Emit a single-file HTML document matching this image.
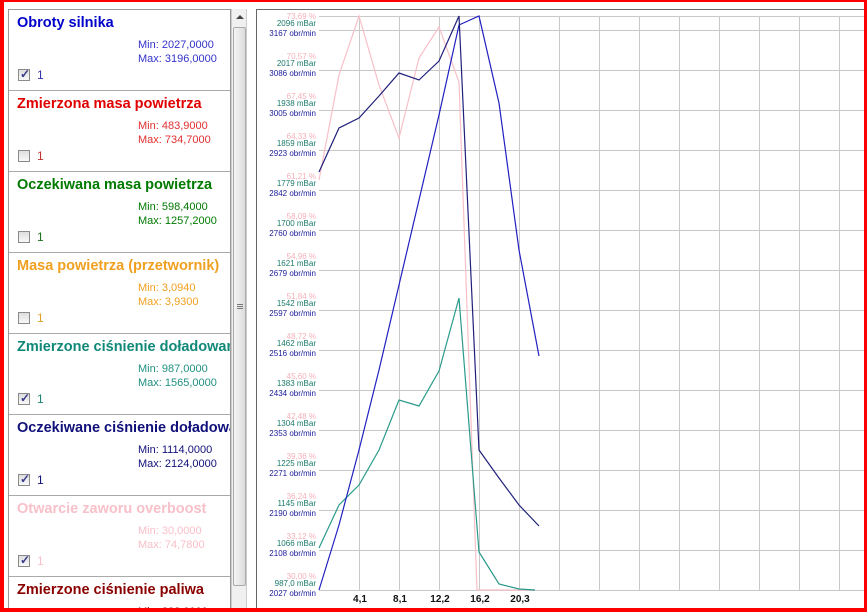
<!DOCTYPE html>
<html><head><meta charset="utf-8"><style>
*{margin:0;padding:0;box-sizing:border-box}
html,body{width:867px;height:612px;overflow:hidden}
body{background:#fff;font-family:"Liberation Sans",Arial,sans-serif;position:relative}
.frame{position:absolute;left:0;top:0;width:867px;height:612px;border-left:4px solid #f00;border-top:2px solid #f00;border-right:3px solid #f00;border-bottom:4px solid #f00;z-index:10;pointer-events:none}
.list{position:absolute;left:8px;top:9px;width:223px;height:603px;border:1px solid #999;border-bottom:none;overflow:hidden;background:#fff}
.item{height:81px;border-bottom:1px solid #aaa;position:relative}
.t{position:absolute;left:8px;top:5px;font-weight:bold;font-size:14.5px;white-space:nowrap}
.mm{position:absolute;left:129px;top:28px;font-size:11px;line-height:14px}
.cb{position:absolute;left:9px;top:59px;width:12px;height:12px;border:1px solid #8a8a8a;background:linear-gradient(#dedede,#f8f8f8)}
.cb.on::after{content:"✓";position:absolute;left:1px;top:-3px;font-size:12px;color:#3a3a8a;font-weight:bold}
.n{position:absolute;left:28px;top:58px;font-size:12px}
.sb{position:absolute;left:231px;top:9px;width:16px;height:603px;background:#f0f0f0;border-left:1px solid #ccc;border-right:1px solid #ccc}
.thumb{position:absolute;left:1px;top:18px;width:13px;height:559px;background:linear-gradient(90deg,#f4f4f4,#dcdcdc);border:1px solid #aaa;border-radius:2px}
</style></head><body>
<div class="list">
 <div class="item" style="color:#0000cc"><div class="t">Obroty silnika</div><div class="mm" style="color:#3333cc">Min: 2027,0000<br>Max: 3196,0000</div><div class="cb on"></div><div class="n" style="color:#3333aa">1</div></div>
 <div class="item" style="color:#e00000"><div class="t">Zmierzona masa powietrza</div><div class="mm" style="color:#e03030">Min: 483,9000<br>Max: 734,7000</div><div class="cb"></div><div class="n" style="color:#c03030">1</div></div>
 <div class="item" style="color:#007a00"><div class="t">Oczekiwana masa powietrza</div><div class="mm" style="color:#007a00">Min: 598,4000<br>Max: 1257,2000</div><div class="cb"></div><div class="n" style="color:#207020">1</div></div>
 <div class="item" style="color:#f0a020"><div class="t">Masa powietrza (przetwornik)</div><div class="mm" style="color:#f0a020">Min: 3,0940<br>Max: 3,9300</div><div class="cb"></div><div class="n" style="color:#e0a020">1</div></div>
 <div class="item" style="color:#108878"><div class="t">Zmierzone ciśnienie doładowania</div><div class="mm" style="color:#209080">Min: 987,0000<br>Max: 1565,0000</div><div class="cb on"></div><div class="n" style="color:#208070">1</div></div>
 <div class="item" style="color:#10107a"><div class="t">Oczekiwane ciśnienie doładowania</div><div class="mm" style="color:#10107a">Min: 1114,0000<br>Max: 2124,0000</div><div class="cb on"></div><div class="n" style="color:#10107a">1</div></div>
 <div class="item" style="color:#f8c0c8"><div class="t">Otwarcie zaworu overboost</div><div class="mm" style="color:#f8c0c8">Min: 30,0000<br>Max: 74,7800</div><div class="cb on"></div><div class="n" style="color:#f8c0c8">1</div></div>
 <div class="item" style="color:#8a0000"><div class="t">Zmierzone ciśnienie paliwa</div><div class="mm" style="color:#8a0000">Min: 328,0000<br>Max: 0</div></div>
</div>
<div class="sb"><div style="position:absolute;left:4px;top:6px;width:0;height:0;border-left:4px solid transparent;border-right:4px solid transparent;border-bottom:4px solid #444"></div><div class="thumb"><div style="position:absolute;left:3px;top:276px;width:6px;height:5px;border-top:1px solid #777;border-bottom:1px solid #777"></div><div style="position:absolute;left:3px;top:278px;width:6px;height:1px;background:#777"></div></div></div>
<svg style="position:absolute;left:0;top:0" width="867" height="612" font-family="Liberation Sans,Arial,sans-serif">
<line x1="256.5" y1="9" x2="256.5" y2="612" stroke="#666"/>
<line x1="256" y1="9.5" x2="867" y2="9.5" stroke="#666"/>
<g stroke="#c8c8c8" stroke-width="1">
<line x1="319" y1="16.5" x2="867" y2="16.5"/>
<line x1="319" y1="30.5" x2="867" y2="30.5"/><line x1="319" y1="70.5" x2="867" y2="70.5"/><line x1="319" y1="110.5" x2="867" y2="110.5"/><line x1="319" y1="150.5" x2="867" y2="150.5"/><line x1="319" y1="190.5" x2="867" y2="190.5"/><line x1="319" y1="230.5" x2="867" y2="230.5"/><line x1="319" y1="270.5" x2="867" y2="270.5"/><line x1="319" y1="310.5" x2="867" y2="310.5"/><line x1="319" y1="350.5" x2="867" y2="350.5"/><line x1="319" y1="390.5" x2="867" y2="390.5"/><line x1="319" y1="430.5" x2="867" y2="430.5"/><line x1="319" y1="470.5" x2="867" y2="470.5"/><line x1="319" y1="510.5" x2="867" y2="510.5"/><line x1="319" y1="550.5" x2="867" y2="550.5"/><line x1="319" y1="590.5" x2="867" y2="590.5"/>
<line x1="359.5" y1="16" x2="359.5" y2="590"/><line x1="399.5" y1="16" x2="399.5" y2="590"/><line x1="439.5" y1="16" x2="439.5" y2="590"/><line x1="479.5" y1="16" x2="479.5" y2="590"/><line x1="519.5" y1="16" x2="519.5" y2="590"/><line x1="559.5" y1="16" x2="559.5" y2="590"/><line x1="599.5" y1="16" x2="599.5" y2="590"/><line x1="639.5" y1="16" x2="639.5" y2="590"/><line x1="679.5" y1="16" x2="679.5" y2="590"/><line x1="719.5" y1="16" x2="719.5" y2="590"/><line x1="759.5" y1="16" x2="759.5" y2="590"/><line x1="799.5" y1="16" x2="799.5" y2="590"/><line x1="839.5" y1="16" x2="839.5" y2="590"/>
</g>
<g font-size="8" text-anchor="end">
<g fill="#f4b0b8">
<text x="316" y="19">73,69 %</text><text x="316" y="59">70,57 %</text><text x="316" y="99">67,45 %</text><text x="316" y="139">64,33 %</text><text x="316" y="179">61,21 %</text><text x="316" y="219">58,09 %</text><text x="316" y="259">54,96 %</text><text x="316" y="299">51,84 %</text><text x="316" y="339">48,72 %</text><text x="316" y="379">45,60 %</text><text x="316" y="419">42,48 %</text><text x="316" y="459">39,36 %</text><text x="316" y="499">36,24 %</text><text x="316" y="539">33,12 %</text><text x="316" y="579">30,00 %</text>
</g>
<g fill="#1a7a6a">
<text x="316" y="26">2096 mBar</text><text x="316" y="66">2017 mBar</text><text x="316" y="106">1938 mBar</text><text x="316" y="146">1859 mBar</text><text x="316" y="186">1779 mBar</text><text x="316" y="226">1700 mBar</text><text x="316" y="266">1621 mBar</text><text x="316" y="306">1542 mBar</text><text x="316" y="346">1462 mBar</text><text x="316" y="386">1383 mBar</text><text x="316" y="426">1304 mBar</text><text x="316" y="466">1225 mBar</text><text x="316" y="506">1145 mBar</text><text x="316" y="546">1066 mBar</text><text x="316" y="586">987,0 mBar</text>
</g>
<g fill="#1a1a9a">
<text x="316" y="36">3167 obr/min</text><text x="316" y="76">3086 obr/min</text><text x="316" y="116">3005 obr/min</text><text x="316" y="156">2923 obr/min</text><text x="316" y="196">2842 obr/min</text><text x="316" y="236">2760 obr/min</text><text x="316" y="276">2679 obr/min</text><text x="316" y="316">2597 obr/min</text><text x="316" y="356">2516 obr/min</text><text x="316" y="396">2434 obr/min</text><text x="316" y="436">2353 obr/min</text><text x="316" y="476">2271 obr/min</text><text x="316" y="516">2190 obr/min</text><text x="316" y="556">2108 obr/min</text><text x="316" y="596">2027 obr/min</text>
</g>
</g>
<g font-size="10" font-weight="bold" text-anchor="middle" fill="#111">
<text x="360" y="602">4,1</text><text x="400" y="602">8,1</text><text x="440" y="602">12,2</text><text x="480" y="602">16,2</text><text x="520" y="602">20,3</text>
</g>
<g fill="none" stroke-width="1.2">
<polyline stroke="#f8c0c8" points="319,180 339,75 359,16 379,85 399,138 419,58 439,27 459,82 477,590 535,590"/>
<polyline stroke="#2a9a8a" points="319,548 339,505 359,485 379,450 399,400 419,406 439,371 459,298 479,552 499,584 519,589 535,590"/>
<polyline stroke="#2020c0" points="319,590 339,525 359,450 379,370 399,285 419,200 439,115 459,25 479,16 499,103 519,250 539,356"/>
<polyline stroke="#20207a" points="319,172 339,128 359,118 379,96 399,73 419,80 439,61 459,16 479,450 499,478 519,505 539,526"/>
</g>
</svg>
<div class="frame"></div>
</body></html>
